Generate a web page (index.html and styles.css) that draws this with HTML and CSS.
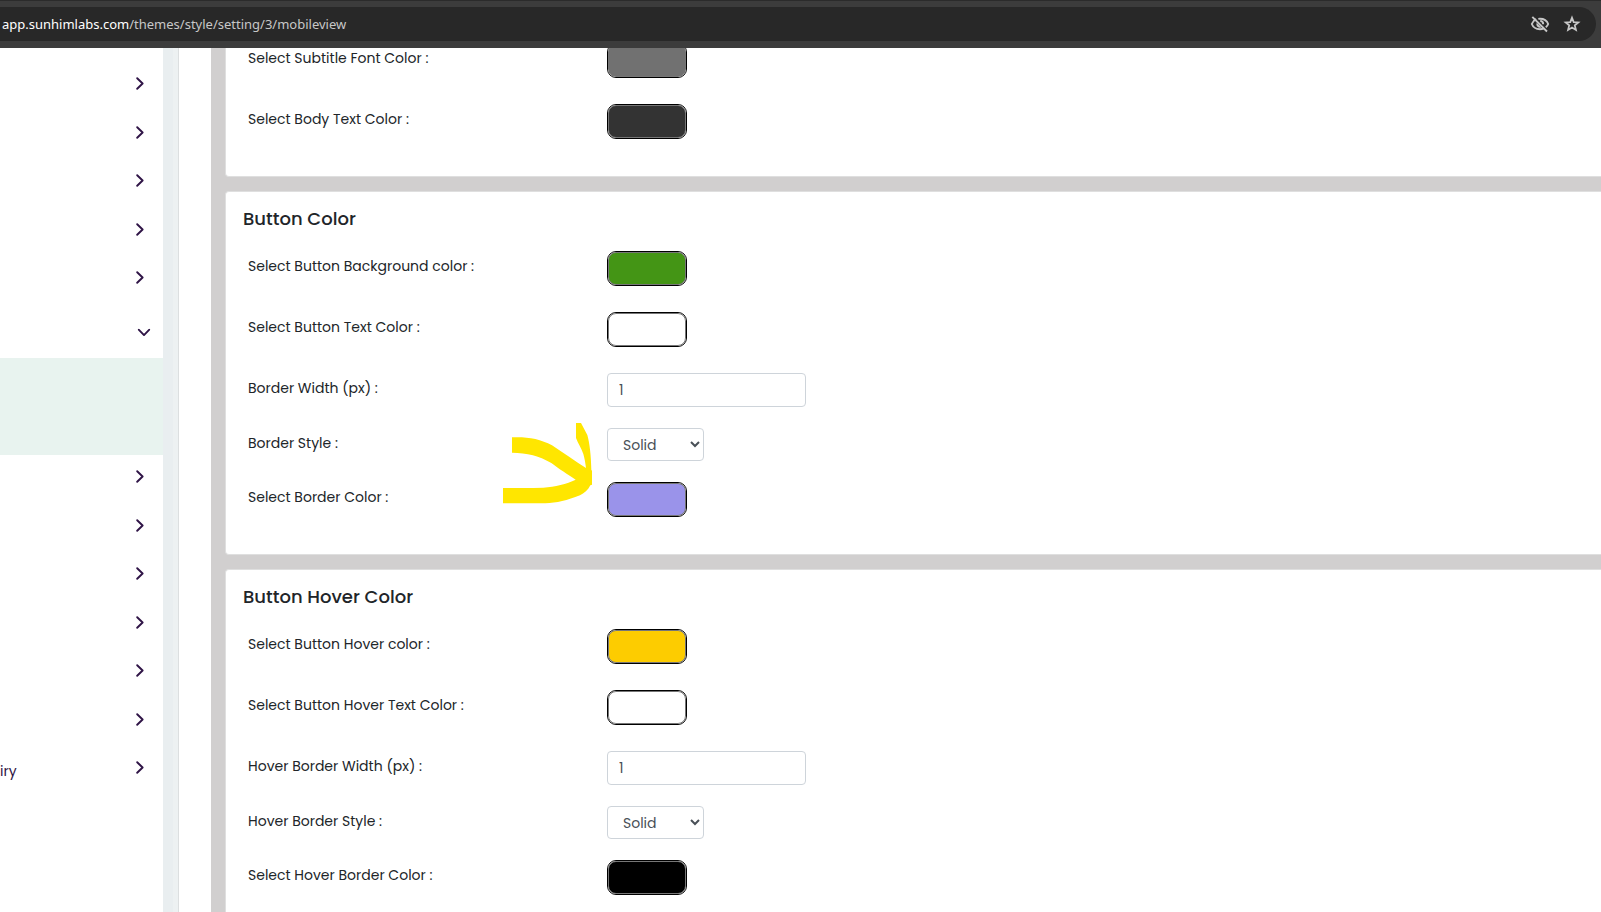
FILE: index.html
```html
<!DOCTYPE html>
<html lang="en">

<head>
    <meta charset="UTF-8">
    <meta name="viewport" content="width=device-width, initial-scale=1.0">
    <title>Style Settings</title>
    <link rel="stylesheet" href="styles.css">
</head>

<body>
    <!-- Shared icons -->
    <svg class="icon-defs" aria-hidden="true">
        <symbol id="chevron" viewBox="0 0 8 13">
            <path d="M1.2 1.2 L6.6 6.5 L1.2 11.8" fill="none" stroke="currentColor" stroke-width="1.9" stroke-linecap="round" stroke-linejoin="round" />
        </symbol>
    </svg>

    <!-- Address bar -->
    <header class="browser-bar">
        <div class="address">
            <span class="url"><span class="host">app.sunhimlabs.com</span>/themes/style/setting/3/mobileview</span>
            <button class="bar-button" aria-label="Tracking protection">
                <svg width="20" height="20" viewBox="0 0 20 20" fill="none" stroke="currentColor" stroke-width="1.9">
                    <path d="M6.2 5.2C3.9 6.2 2.5 8 1.800 10c1.300 3.300 4.400 5.200 8.200 5.200 1.400 0 2.700-.3 3.900-.8M8.300 4.900C8.900 4.800 9.400 4.800 10 4.800c3.800 0 6.900 1.900 8.200 5.200-.5 1.300-1.300 2.400-2.400 3.300" />
                    <path d="M10.200 6.900a3.200 3.200 0 0 1 3 3.300" />
                    <path d="M6.700 8.800a3.500 3.500 0 0 0 4.700 4.600z" fill="currentColor" stroke="none" />
                    <path d="M2.300 2.800 L17 17.500" />
                </svg>
            </button>
            <button class="bar-button" aria-label="Bookmark this page">
                <svg width="20" height="20" viewBox="0 0 20 20" fill="none" stroke="currentColor" stroke-width="1.8">
                    <path d="M10 3.800 L11.700 8.100 L16.300 8.400 L12.800 11.400 L13.900 15.900 L10 13.500 L6.100 15.900 L7.200 11.400 L3.700 8.400 L8.300 8.100 Z" />
                </svg>
            </button>
        </div>
    </header>

    <div class="page">
        <!-- Sidebar -->
        <nav class="sidebar">
            <ul class="menu">
                <li><a href="#" class="menu-item"><svg class="chevron"><use href="#chevron" /></svg></a></li>
                <li><a href="#" class="menu-item"><svg class="chevron"><use href="#chevron" /></svg></a></li>
                <li><a href="#" class="menu-item"><svg class="chevron"><use href="#chevron" /></svg></a></li>
                <li><a href="#" class="menu-item"><svg class="chevron"><use href="#chevron" /></svg></a></li>
                <li><a href="#" class="menu-item"><svg class="chevron"><use href="#chevron" /></svg></a></li>
            </ul>
            <a href="#" class="menu-item open"><svg class="chevron"><use href="#chevron" /></svg></a>
            <div class="submenu"></div>
            <ul class="menu">
                <li><a href="#" class="menu-item"><svg class="chevron"><use href="#chevron" /></svg></a></li>
                <li><a href="#" class="menu-item"><svg class="chevron"><use href="#chevron" /></svg></a></li>
                <li><a href="#" class="menu-item"><svg class="chevron"><use href="#chevron" /></svg></a></li>
                <li><a href="#" class="menu-item"><svg class="chevron"><use href="#chevron" /></svg></a></li>
                <li><a href="#" class="menu-item"><svg class="chevron"><use href="#chevron" /></svg></a></li>
                <li><a href="#" class="menu-item"><svg class="chevron"><use href="#chevron" /></svg></a></li>
                <li><a href="#" class="menu-item"><span class="menu-text">iry</span><svg class="chevron"><use href="#chevron" /></svg></a></li>
            </ul>
        </nav>
        <div class="scroll-track"></div>

        <!-- Style settings -->
        <main class="settings">
            <div class="cards">
                <section class="card card-scrolled">
                    <div class="row">
                        <label for="subtitle-color">Select Subtitle Font Color :</label>
                        <input type="color" class="swatch" id="subtitle-color" value="#717171">
                    </div>
                    <div class="row">
                        <label for="body-color">Select Body Text Color :</label>
                        <input type="color" class="swatch" id="body-color" value="#333333">
                    </div>
                </section>

                <section class="card">
                    <h2>Button Color</h2>
                    <div class="row">
                        <label for="btn-bg">Select Button Background color :</label>
                        <input type="color" class="swatch" id="btn-bg" value="#449515">
                    </div>
                    <div class="row">
                        <label for="btn-text">Select Button Text Color :</label>
                        <input type="color" class="swatch" id="btn-text" value="#ffffff">
                    </div>
                    <div class="row">
                        <label for="border-width">Border Width (px) :</label>
                        <input type="number" class="field" id="border-width" value="1">
                    </div>
                    <div class="row">
                        <label for="border-style">Border Style :</label>
                        <select class="field-select" id="border-style">
                            <option>Solid</option>
                        </select>
                    </div>
                    <div class="row">
                        <label for="border-color">Select Border Color :</label>
                        <input type="color" class="swatch" id="border-color" value="#9a93ea">
                    </div>
                    <!-- Marker arrow -->
                    <svg class="marker" viewBox="60 180 291 261" aria-hidden="true">
                        <path fill="#ffe600" d="M96 232 C140 230 180 236 216 256 C252 280 286 304 318 324 C316 308 314 296 310 282 C304 264 294 250 288 234 L288 189 L303 189 L322 225 C329 250 333 285 334 330 L336 332 L336 374 L331 376 C325 390 312 400 300 406 C262 421 230 429 196 430 L69 430 L69 384 C110 384 150 385 190 383 C225 380 260 372 287 359 C265 345 235 325 214 309 C180 288 140 278 96 278 Z" />
                    </svg>
                </section>

                <section class="card">
                    <h2>Button Hover Color</h2>
                    <div class="row">
                        <label for="hover-bg">Select Button Hover color :</label>
                        <input type="color" class="swatch" id="hover-bg" value="#fdcc00">
                    </div>
                    <div class="row">
                        <label for="hover-text">Select Button Hover Text Color :</label>
                        <input type="color" class="swatch" id="hover-text" value="#ffffff">
                    </div>
                    <div class="row">
                        <label for="hover-width">Hover Border Width (px) :</label>
                        <input type="number" class="field" id="hover-width" value="1">
                    </div>
                    <div class="row">
                        <label for="hover-style">Hover Border Style :</label>
                        <select class="field-select" id="hover-style">
                            <option>Solid</option>
                        </select>
                    </div>
                    <div class="row">
                        <label for="hover-border">Select Hover Border Color :</label>
                        <input type="color" class="swatch" id="hover-border" value="#000000">
                    </div>
                </section>
            </div>
        </main>
    </div>
</body>

</html>
```

FILE: styles.css
```css
* {
    margin: 0;
    padding: 0;
    box-sizing: border-box;
}

body {
    display: flex;
    flex-direction: column;
    height: 100vh;
    overflow: hidden;
    background: #fff;
    color: #212529;
    font-family: Poppins, Inter, sans-serif;
    font-size: 14px;
}

.icon-defs {
    display: none;
}

/* Address bar */
.browser-bar {
    flex: none;
    padding: 6px 5px 7px 0;
    background: #3c3c3c;
    border-top: 1px solid #2b2b2b;
}

.address {
    display: flex;
    align-items: center;
    height: 34px;
    padding: 0 14px 0 2px;
    background: #282828;
    border-radius: 0 17px 17px 0;
    font-family: "Segoe UI", "Noto Sans", sans-serif;
    font-size: 13px;
}

.url {
    flex: 1;
    color: #c7c7c7;
}

.host {
    color: #fff;
}

.bar-button {
    width: 20px;
    height: 20px;
    margin-left: 12px;
    background: none;
    border: none;
    color: #c7c7c7;
}

/* Sidebar */
.page {
    display: flex;
    flex: 1;
    min-height: 0;
}

.sidebar {
    flex: none;
    width: 163px;
    padding-top: 14px;
    overflow: hidden;
}

.menu {
    list-style: none;
}

.menu-item {
    display: flex;
    align-items: center;
    height: 48px;
    padding: 0 19px 5px 0;
    color: #2f1446;
    font-size: 14px;
    text-decoration: none;
}

.menu li:nth-child(even) .menu-item {
    height: 49px;
    padding-bottom: 4px;
}

.menu-text {
    padding-top: 8px;
}

.chevron {
    width: 8px;
    height: 13px;
    margin-left: auto;
}

.menu-item.open {
    height: 54px;
    padding: 2px 15px 0 0;
}

.open .chevron {
    transform: rotate(90deg);
}

.submenu {
    height: 97px;
    background: #e8f3ef;
}

.scroll-track {
    flex: none;
    width: 16px;
    background: linear-gradient(to right, #e9eef0 10px, #edf1f2 10px);
    border-right: 1px solid #dcdfe0;
}

/* Settings panel */
.settings {
    flex: 1;
    margin-left: 32px;
    padding-left: 14px;
    overflow: hidden;
    background: #d1cfcf;
}

.cards {
    display: flex;
    flex-direction: column;
    gap: 14px;
}

.card {
    position: relative;
    padding: 13px 17px 11px;
    background: #fff;
    border: 1px solid #dfdfdf;
    border-right: none;
    border-radius: 4px 0 0 4px;
}

/* first card is partly scrolled under the address bar */
.card-scrolled {
    margin-top: -19px;
}

h2 {
    margin-bottom: 18px;
    font-size: 18px;
    font-weight: 500;
    line-height: 28px;
}

.row {
    display: flex;
    align-items: flex-start;
    margin-bottom: 21px;
    padding-left: 5px;
}

label {
    width: 359px;
    line-height: 30px;
}

.swatch {
    appearance: none;
    width: 80px;
    height: 35px;
    margin-bottom: 5px;
    background: none;
    border: 1px solid #000;
    border-radius: 9px;
}

.swatch::-webkit-color-swatch-wrapper {
    padding: 0;
}

.swatch::-webkit-color-swatch {
    border: 1px solid #767676;
    border-radius: 8px;
}

.field,
.field-select {
    background: #fff;
    border: 1px solid #ced4da;
    border-radius: 4px;
    color: #495057;
    font-family: inherit;
    font-size: 14px;
}

.field {
    width: 199px;
    height: 34px;
    padding: 0 11px;
}

.field-select {
    width: 97px;
    height: 33px;
    padding-left: 11px;
}

.marker {
    position: absolute;
    top: 228px;
    left: 274px;
    width: 97px;
    height: 87px;
}
```
